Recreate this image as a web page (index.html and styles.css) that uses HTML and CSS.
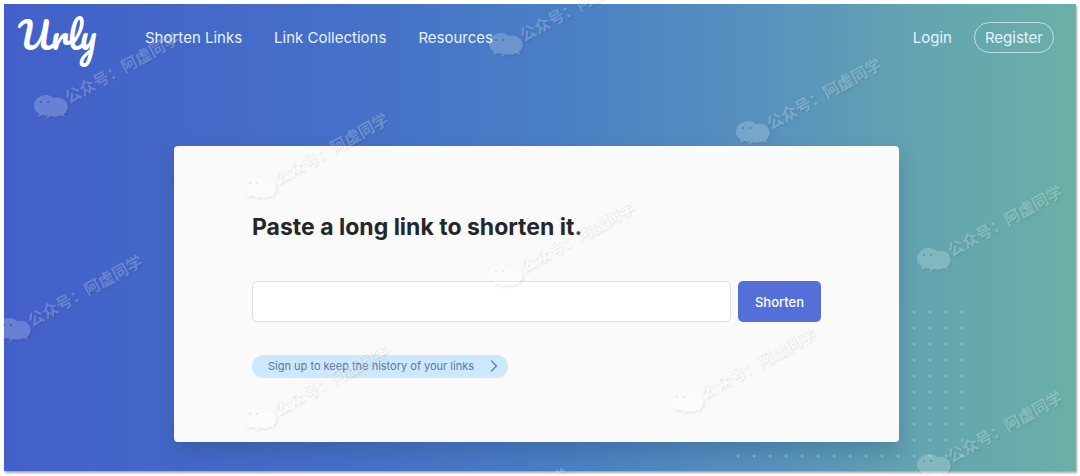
FILE: index.html
```html
<!DOCTYPE html>
<html lang="en">

<head>
  <meta charset="UTF-8">
  <meta name="viewport" content="width=device-width, initial-scale=1.0">
  <title>Urly</title>
  <link rel="stylesheet" href="styles.css">
</head>

<body>

  <div class="page">
    <header class="navbar">
      <a href="#" class="logo">Urly</a>
      <nav class="nav-links">
        <a href="#">Shorten Links</a>
        <a href="#">Link Collections</a>
        <a href="#">Resources</a>
      </nav>
      <div class="account">
        <a href="#">Login</a>
        <a href="#" class="register">Register</a>
      </div>
    </header>

    <main class="hero">
      <!-- Dotted pattern behind the card -->
      <div class="dots"></div>

      <section class="card">
        <h1><label for="long-link">Paste a long link to shorten it.</label></h1>
        <form class="shorten-form">
          <input type="text" id="long-link" name="long_link">
          <button type="submit">Shorten</button>
        </form>
        <a href="#" class="signup">
          Sign up to keep the history of your links
          <svg width="8" height="12" viewBox="0 0 8 12" fill="none" stroke="currentColor" stroke-width="1.2" stroke-linecap="round" stroke-linejoin="round">
            <path d="M1.5 1 L6.5 6 L1.5 11" />
          </svg>
        </a>
      </section>
    </main>
  </div>

  <!-- Watermark -->
  <svg class="watermark" aria-hidden="true">
    <defs>
      <g id="mark">
        <path fill-rule="evenodd" d="M-5 -11 C-12 -11 -17 -6 -17 0 C-17 4 -15 6 -12 8 L-13 11 L-8 9 C-6 10 -5 10 -3 9 L-5 13 L0 10 C3 11 7 11 10 9 L14 11 L13 8 C19 4 18 -6 9 -8 C7 -9 5 -8 3 -8 C1 -10 -2 -11 -5 -11 Z M-10 -5 a1 1 0 1 0 0.1 0 Z M-3 -5 a1 1 0 1 0 0.1 0 Z" />
        <text x="18" y="-2" transform="rotate(-29 18 -2)">公众号：阿虚同学</text>
      </g>
    </defs>
    <g class="marks">
      <use href="#mark" x="51" y="106" />
      <use href="#mark" x="14" y="329" />
      <use href="#mark" x="260" y="187" />
      <use href="#mark" x="260" y="418" />
      <use href="#mark" x="506" y="44" />
      <use href="#mark" x="506" y="275" />
      <use href="#mark" x="440" y="542" />
      <use href="#mark" x="753" y="132" />
      <use href="#mark" x="687" y="401" />
      <use href="#mark" x="934" y="259" />
      <use href="#mark" x="934" y="465" />
    </g>
  </svg>

</body>

</html>
```

FILE: styles.css
```css
* {
  box-sizing: border-box;
}

body {
  position: relative;
  margin: 0;
  padding: 4px;
  background-color: #fff;
  font-family: Inter, "Noto Sans CJK SC", sans-serif;
  overflow-x: hidden;
}

a {
  color: inherit;
  text-decoration: none;
}

.page {
  background: linear-gradient(90deg, #4360c9 0%, #4570c8 32%, #4a7fc5 52%, #5893bd 72%, #64a5b0 86%, #6ab0a8 100%);
  box-shadow: 1px 2px 2px rgba(0, 0, 0, 0.35);
}

.navbar {
  display: flex;
  align-items: center;
  height: 66px;
  padding: 0 22px 0 14px;
  color: #e4f2ff;
  font-size: 15px;
}

.logo {
  width: 127px;
  padding-bottom: 4px;
  color: #fff;
  font-family: Pacifico, cursive;
  font-size: 37px;
  line-height: 66px;
}

.nav-links {
  display: flex;
  gap: 32px;
}

.account {
  display: flex;
  align-items: center;
  gap: 22px;
  margin-left: auto;
}

.register {
  padding: 0 10px;
  border: 1px solid rgba(228, 242, 255, 0.7);
  border-radius: 16px;
  line-height: 29px;
}

.hero {
  position: relative;
  padding: 76px 177px 29px 170px;
}

.dots {
  position: absolute;
  right: 106px;
  bottom: 7px;
  width: 240px;
  height: 160px;
  background-image: radial-gradient(circle at center, #7bbecb 1px, transparent 2px);
  background-size: 16px 16px;
}

.card {
  position: relative;
  padding: 65px 78px 64px;
  border-radius: 4px;
  background-color: #fafafa;
  box-shadow: 0 10px 20px rgba(30, 60, 90, 0.25);
}

.card h1 {
  margin: 0 0 38px;
  color: #25262b;
  font-size: 23px;
  font-weight: 700;
  line-height: 32px;
}

.shorten-form {
  display: flex;
  gap: 7px;
  margin-bottom: 32px;
}

.shorten-form input {
  flex: 1;
  min-width: 0;
  height: 41px;
  padding: 0 12px;
  border: 1px solid #dddfe3;
  border-radius: 5px;
  background-color: #fff;
  font: inherit;
}

.shorten-form button {
  width: 83px;
  border: none;
  border-radius: 5px;
  background-color: #556fd9;
  color: #fff;
  font-family: inherit;
  font-size: 13px;
  font-weight: 500;
  cursor: pointer;
}

.signup {
  display: inline-flex;
  align-items: center;
  gap: 16px;
  height: 23px;
  padding: 0 10px 0 16px;
  border-radius: 12px;
  background-color: #cde8fc;
  color: #5878a6;
  font-size: 11px;
}

.watermark {
  position: absolute;
  top: 0;
  left: 0;
  width: 100%;
  height: 100%;
  fill: #fff;
  font-size: 16px;
  font-weight: 700;
  opacity: 0.2;
  pointer-events: none;
}

.marks {
  filter: drop-shadow(1px 1px 1px rgba(0, 0, 0, 0.5));
}
```
